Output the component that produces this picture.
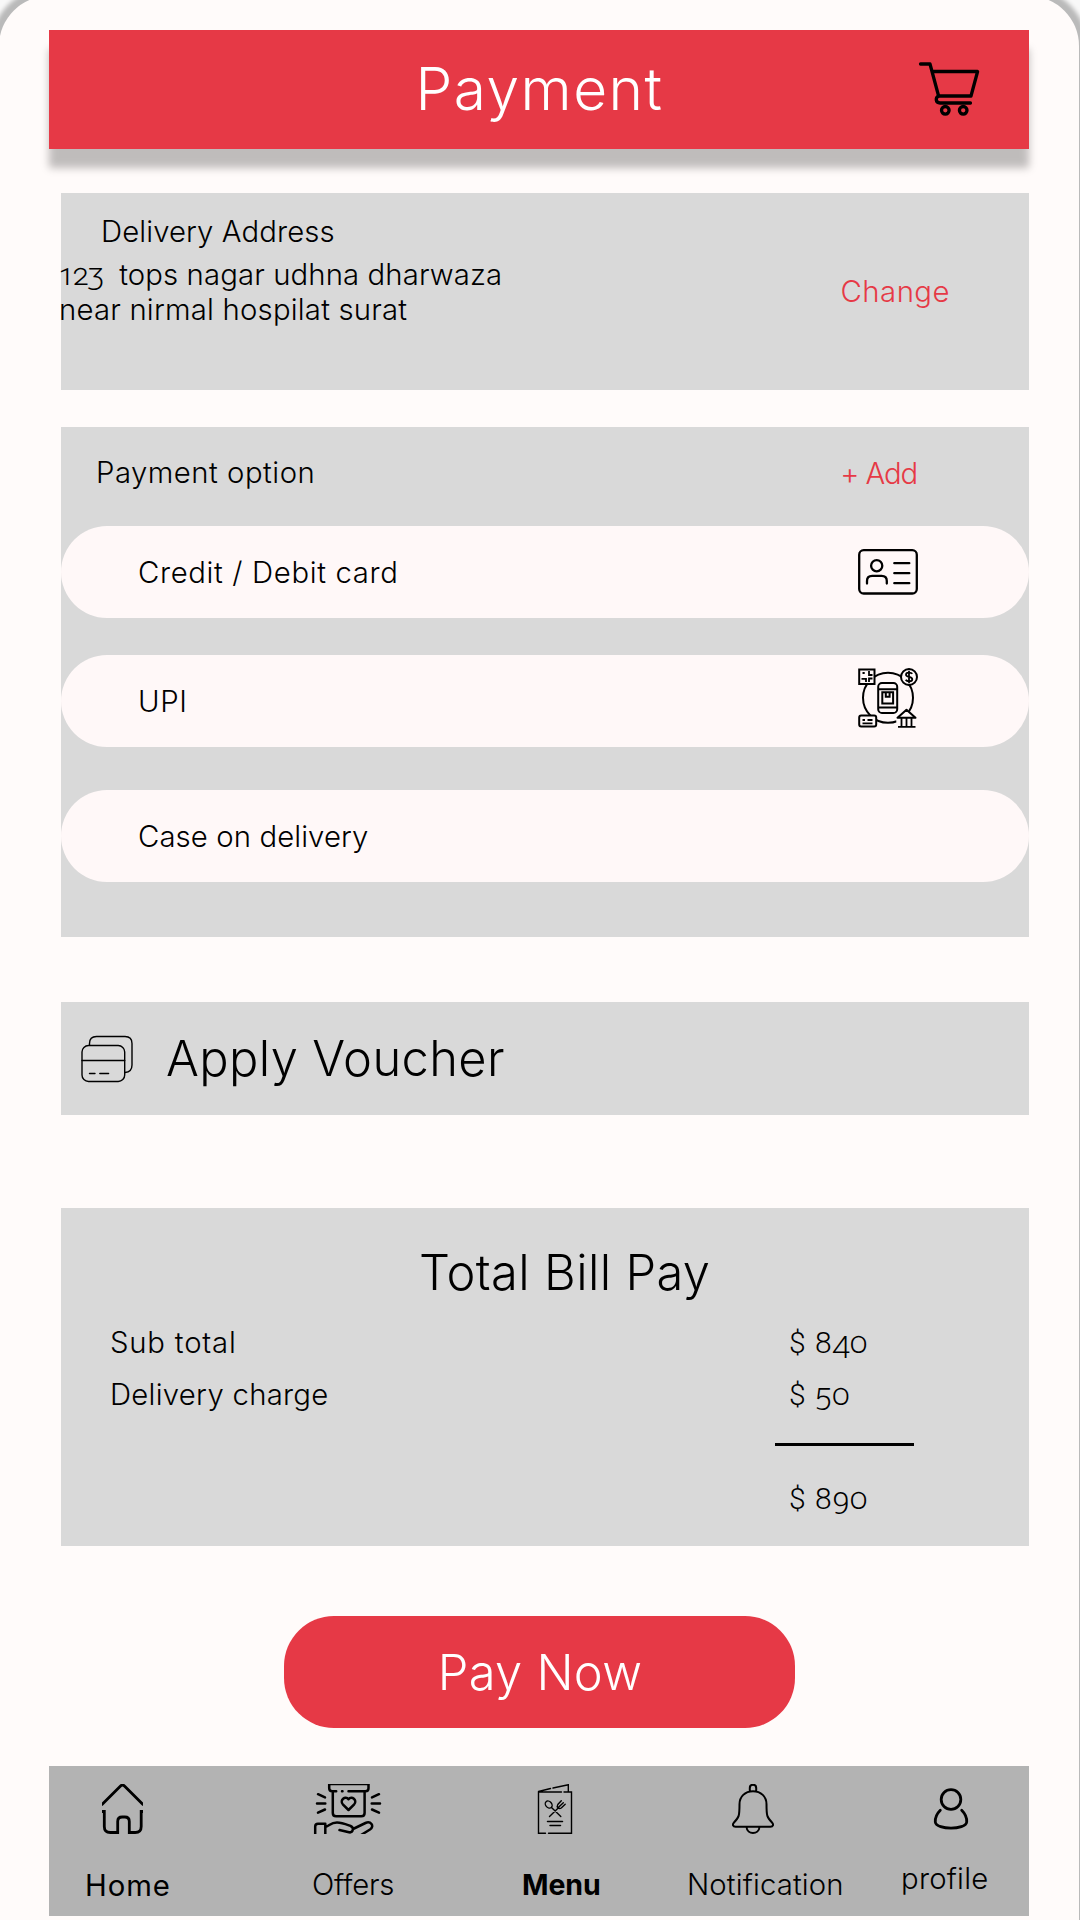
<script>
  const address = ['123\u00a0 tops nagar udhna dharwaza', 'near nirmal hospilat surat'];
</script>

<div class="screen">
  <header class="topbar">
    <h1>Payment</h1>
    <svg class="cart" viewBox="918 60 62 58" fill="none" stroke="#000" stroke-width="3.3" stroke-linecap="round" stroke-linejoin="round">
      <path d="M920.5 64H930l8.6 32H971l6.6-24.5H932.5" />
      <path d="M938.6 96c-3.4 1.500-3.200 7 1.400 7H970.500" />
      <circle cx="945.300" cy="110.300" r="3.800" />
      <circle cx="963.200" cy="110.300" r="3.800" />
    </svg>
  </header>

  <section class="panel address">
    <div class="address-text">
      <h2>Delivery Address</h2>
      <p class="line-one"><span class="num house">123</span>{address[0].slice(3)}</p>
      <p class="line-two">{address[1]}</p>
    </div>
    <a class="change" href="#change">Change</a>
  </section>

  <section class="panel options">
    <div class="options-head">
      <h2>Payment option</h2>
      <a class="add" href="#add">+ Add</a>
    </div>
    <div class="pill">
      <span class="credit">Credit / Debit card</span>
      <svg class="id-card" viewBox="857 548 62 48" fill="none" stroke="#000" stroke-width="2.300" stroke-linecap="round">
        <rect x="859.200" y="550.200" width="57.600" height="43.300" rx="4.500" />
        <circle cx="876.700" cy="565.700" r="5.600" />
        <path d="M867 583.500v-2.500q0-5.200 5.200-5.200h9.400q5.200 0 5.200 5.200v2.500M894.300 563.200h15M894.300 573.200h15M894.300 583.200h15" />
      </svg>
    </div>
    <div class="pill second">
      <span class="upi">UPI</span>
      <svg class="upi-icon" viewBox="857 667 62 62" fill="none" stroke="#000" stroke-width="2">
        <circle cx="888" cy="697.800" r="25" />
        <g fill="#fff8f8">
          <rect x="859.200" y="669.500" width="15.300" height="14.500" />
          <circle cx="909" cy="677" r="8" />
          <rect x="878.200" y="683" width="19" height="30" rx="3.800" />
          <rect x="859.200" y="715.500" width="17" height="11" rx="2" />
          <path stroke="none" d="M896 719l10.500-10 10.500 10v9h-20z" />
          <path stroke-linejoin="round" d="M897.500 717.800l9-8 9 8z" />
        </g>
        <path d="M878.200 689.200h19M878.200 707.500h19M882.300 692.300h10.800v11.200h-10.800zM885.800 693v3.800h3.800V693" />
        <path stroke-width="1.800" d="M862.500 673h2.200M869 671v4h3.500M861.500 678.800h4.500v3.200M869 682v-3.500h3.500M862.500 720h2.500M867.500 720h5M862.500 723.300h10M901.500 718v8M911.500 718v8M906.500 718v8M898 726.800h17.500" />
        <path stroke-width="1.800" d="M912.300 673.800c-1.200-1.700-6.300-1.900-6.300.9s6.300 1.600 6.300 4.600c0 2.700-5.300 2.700-6.600.5M909 670.800v12.400" />
      </svg>
    </div>
    <div class="pill third"><span class="cod">Case on delivery</span></div>
  </section>

  <section class="panel voucher">
    <svg class="cards" viewBox="80 1034 54 50" fill="none" stroke="#000" stroke-width="1.400" stroke-linecap="round">
      <rect x="82" y="1045.500" width="42.700" height="36" rx="6.500" />
      <path d="M82 1060.500h42.700M89.500 1073.500h5.500M99.800 1073.500h8.800M89.500 1045v-1.500q0-7 7-7h28.500q7 0 7 7v21.500q0 7-7 7.500" />
    </svg>
    <span>Apply Voucher</span>
  </section>

  <section class="panel bill">
    <h2>Total Bill Pay</h2>
    <div class="row"><span class="sub">Sub total</span><span class="num">$ 840</span></div>
    <div class="row charge"><span class="fee">Delivery charge</span><span class="num">$ 50</span></div>
    <hr />
    <div class="row"><span></span><span class="num">$ 890</span></div>
  </section>

  <button class="pay">Pay Now</button>

  <nav>
    <a class="home" href="#home">
      <svg viewBox="102 1784 41 50" fill="none" stroke="#000" stroke-width="2.800">
        <path d="M101.500 1805l18.800-18.800q2.200-2.200 4.400 0l18.800 18.800M101.500 1811.500h2.800v15q0 6 6 6h7.400v-11q0-4.500 4.500-4.500h2.600q4.500 0 4.500 4.500v11h5.900q6 0 6-6v-15h2.800" />
      </svg>
      <span>Home</span>
    </a>
    <a class="offers" href="#offers">
      <svg viewBox="313 1784 69 50" fill="none" stroke="#000" stroke-width="2.500" stroke-linecap="round" stroke-linejoin="round">
        <path d="M329.200 1784.300v4q0 3 3 3h4M342 1791.300h.5M348.500 1791.300h17q3 0 3-3v-4M332.800 1792v21q0 3.300 3.300 3.300h25.200q3.300 0 3.300-3.300v-21" />
        <path stroke-width="1.500" d="M329.200 1784.500h39.300" />
        <path d="M348.500 1810l-5.700-5.700c-3.500-4 2.500-9.300 5.700-5 3.200-4.300 9.200 1 5.700 5z" />
        <path d="M318 1794.200l7 3.200M317 1803.500h8.300M318 1812.700l7-3.200M379 1794.200l-7 3.200M380 1803.500h-8.300M379 1812.700l-7-3.200" />
        <path d="M315.200 1836v-9.500q0-2.800 2.800-2.800h7.300v12M325.500 1827c4-1 5-4.500 11.500-4.500 5 0 9 1.800 13.500 3.500 4 1.700 2.500 7-1.500 6.300l-9.500-2.300M353 1829l12.500-6c5-2.300 9.500 3 4.500 6.500l-9 5.500" />
      </svg>
      <span>Offers</span>
    </a>
    <a class="menu" href="#menu">
      <svg viewBox="537 1784 36 50" fill="none" stroke="#000" stroke-width="1.400" stroke-linecap="round">
        <path d="M538.500 1792v41.300h7M548.500 1833.300h23V1792h-7.500M538.500 1792h23M538.500 1791.500l12-3M553 1788l15.300-3.300v7" />
        <ellipse cx="548.700" cy="1804.600" rx="3" ry="3.900" transform="rotate(-42 548.700 1804.600)" />
        <path d="M551.500 1807.500l9.300 9M549.500 1816.500l9-8.700M561.300 1800.800l-3.500 3.700q-1.200 2 .2 3.300t3.300.2l3.900-3.700M563.300 1802.800l-4.500 4.300" />
        <path stroke-width="1.500" d="M547.500 1821.600h15M550 1825.500h10.500" />
      </svg>
      <span>Menu</span>
    </a>
    <a class="notification" href="#notification">
      <svg viewBox="731 1784 44 50" fill="none" stroke="#000" stroke-width="2" stroke-linejoin="round">
        <path d="M749.800 1791.500v-3.500q0-3.200 3.200-3.200t3.200 3.200v3.500M753 1791.200c8 0 13.500 5.500 13.500 13 0 12 .5 13 5.500 18.300 2 2.200 1 4.300-1.500 4.300h-35c-2.500 0-3.500-2.100-1.500-4.300 5-5.300 5.500-6.300 5.500-18.300 0-7.500 5.500-13 13.500-13zM746.500 1827c.6 8 12.400 8 13 0" />
      </svg>
      <span>Notification</span>
    </a>
    <a class="profile" href="#profile">
      <svg viewBox="932 1787 38 43" fill="none" stroke="#000" stroke-width="2.800" stroke-linecap="round">
        <circle cx="951" cy="1799.500" r="9.800" />
        <path d="M940.300 1810.200c-3.300 3.300-5.300 8-5 11.800.3 4.200 8.700 6.200 15.700 6.200s15.400-2 15.700-6.200c.3-3.800-1.700-8.500-5-11.800" />
      </svg>
      <span>profile</span>
    </a>
  </nav>
</div>

<style>
  :global(body) {
    background: #f8f8f8;
    overflow: hidden;
  }

  .screen {
    box-sizing: border-box;
    width: 1080px;
    height: 1974px;
    margin: -4px 0 -50px -1px;
    padding: 34px 50px 0;
    display: flex;
    flex-direction: column;
    background: #fffbfa;
    border-radius: 50px;
    box-shadow: 0 0 4px 8px rgba(0, 0, 0, 0.25);
    font: 300 29.3px/35px Inter, 'Liberation Sans', sans-serif;
    color: #000;
  }

  h1, h2, p { margin: 0; font-weight: inherit; font-size: inherit; }
  a { color: inherit; text-decoration: none; }
  svg { display: block; flex: none; }
  span, a, h1, h2, p { white-space: nowrap; }

  .num {
    font-family: Roboto, sans-serif;
    font-size: 30px;
    font-variant-numeric: oldstyle-nums;
    letter-spacing: 1px;
  }
  .num.house { letter-spacing: -1.5px; }

  .topbar {
    display: grid;
    grid-template-columns: 1fr auto 1fr;
    align-items: center;
    height: 119px;
    background: #e63946;
    box-shadow: 0 19px 8px rgba(0, 0, 0, 0.25);
  }
  .topbar h1 {
    grid-column: 2;
    padding: 0 0 2px 1px;
    color: #fff;
    font-size: 58.6px;
    line-height: 70px;
    letter-spacing: 1.5px;
  }
  .cart { width: 62px; height: 58px; justify-self: end; margin: 0 49px 2px 0; }

  .panel { margin-left: 12px; background: #d9d9d9; }

  .address {
    display: flex;
    justify-content: space-between;
    height: 197px;
    margin-top: 44px;
  }
  .address-text { padding-top: 21px; }
  .address h2 { padding-left: 40px; letter-spacing: 0.1px; }
  .address p { margin-left: -2px; }
  .address .line-one { padding-top: 8px; margin-left: -4px; letter-spacing: 0.12px; }
  .line-two { letter-spacing: 0.21px; }
  .change { padding: 81px 79px 0 0; letter-spacing: 0.5px; }
  .change, .add { color: #e63946; }

  .options { height: 510px; margin-top: 37px; }
  .options-head {
    display: flex;
    justify-content: space-between;
    padding: 28px 112px 36px 35px;
  }
  .options-head h2 { letter-spacing: 0.5px; }
  .add { letter-spacing: -1.1px; padding-top: 1px; margin-bottom: -1px; }
  .pill {
    display: flex;
    align-items: center;
    justify-content: space-between;
    height: 92px;
    padding: 0 110px 0 77px;
    box-sizing: border-box;
    border-radius: 46px;
    background: #fff8f8;
  }
  .second { margin-top: 37px; }
  .third { margin-top: 43px; }
  .credit { letter-spacing: 0.65px; }
  .upi { letter-spacing: 0.6px; }
  .cod { letter-spacing: 0.1px; }
  .id-card { width: 62px; height: 48px; }
  .upi-icon { width: 62px; height: 62px; margin-bottom: 6px; }

  .voucher {
    display: flex;
    align-items: center;
    gap: 32px;
    height: 113px;
    margin-top: 65px;
    padding-left: 19px;
    font-size: 48.8px;
    line-height: 58px;
    letter-spacing: 0.38px;
  }
  .cards { width: 54px; height: 50px; }

  .bill {
    box-sizing: border-box;
    height: 338px;
    margin-top: 93px;
    padding: 36px 0 0 49px;
  }
  .bill h2 {
    padding: 0 0 23px 309px;
    font-size: 48.8px;
    line-height: 58px;
    letter-spacing: 0.36px;
  }
  .row { display: grid; grid-template-columns: 679px 1fr; height: 35px; }
  .charge { margin-top: 17px; }
  .sub { letter-spacing: 0.8px; }
  .fee { letter-spacing: 0.28px; }
  .bill hr {
    width: 139px;
    height: 3px;
    margin: 31px 0 35px 665px;
    border: 0;
    background: #000;
  }

  .pay {
    align-self: center;
    width: 511px;
    height: 112px;
    margin-top: 70px;
    padding: 0 0 0 2px;
    border: 0;
    border-radius: 50px;
    background: #e63946;
    color: #fff;
    font: inherit;
    font-size: 48.8px;
    letter-spacing: 0.29px;
  }

  nav {
    display: grid;
    grid-template-columns: 226px 210px 166px 214px 128px;
    box-sizing: border-box;
    height: 150px;
    margin-top: 38px;
    padding: 18px 0 0 36px;
    background: #b3b3b3;
  }
  nav a { display: flex; flex-direction: column; gap: 33px; }
  .home { gap: 34px; }
  .home svg { width: 41px; height: 50px; margin-left: 17px; }
  .home span { font-weight: 400; letter-spacing: 0.9px; }
  .offers svg { width: 69px; height: 50px; margin-left: 2px; }
  .offers span { margin-left: 1px; letter-spacing: -0.22px; }
  .menu svg { width: 36px; height: 50px; margin-left: 16px; }
  .menu span { margin-left: 1px; font-weight: 700; font-size: 28.5px; letter-spacing: -0.1px; }
  .notification svg { width: 44px; height: 50px; margin-left: 44px; }
  .notification span { letter-spacing: 0.13px; }
  nav .profile { padding-top: 3px; gap: 31px; }
  .profile svg { width: 38px; height: 43px; margin-left: 31px; }
  .profile span { letter-spacing: 0.24px; }
</style>
